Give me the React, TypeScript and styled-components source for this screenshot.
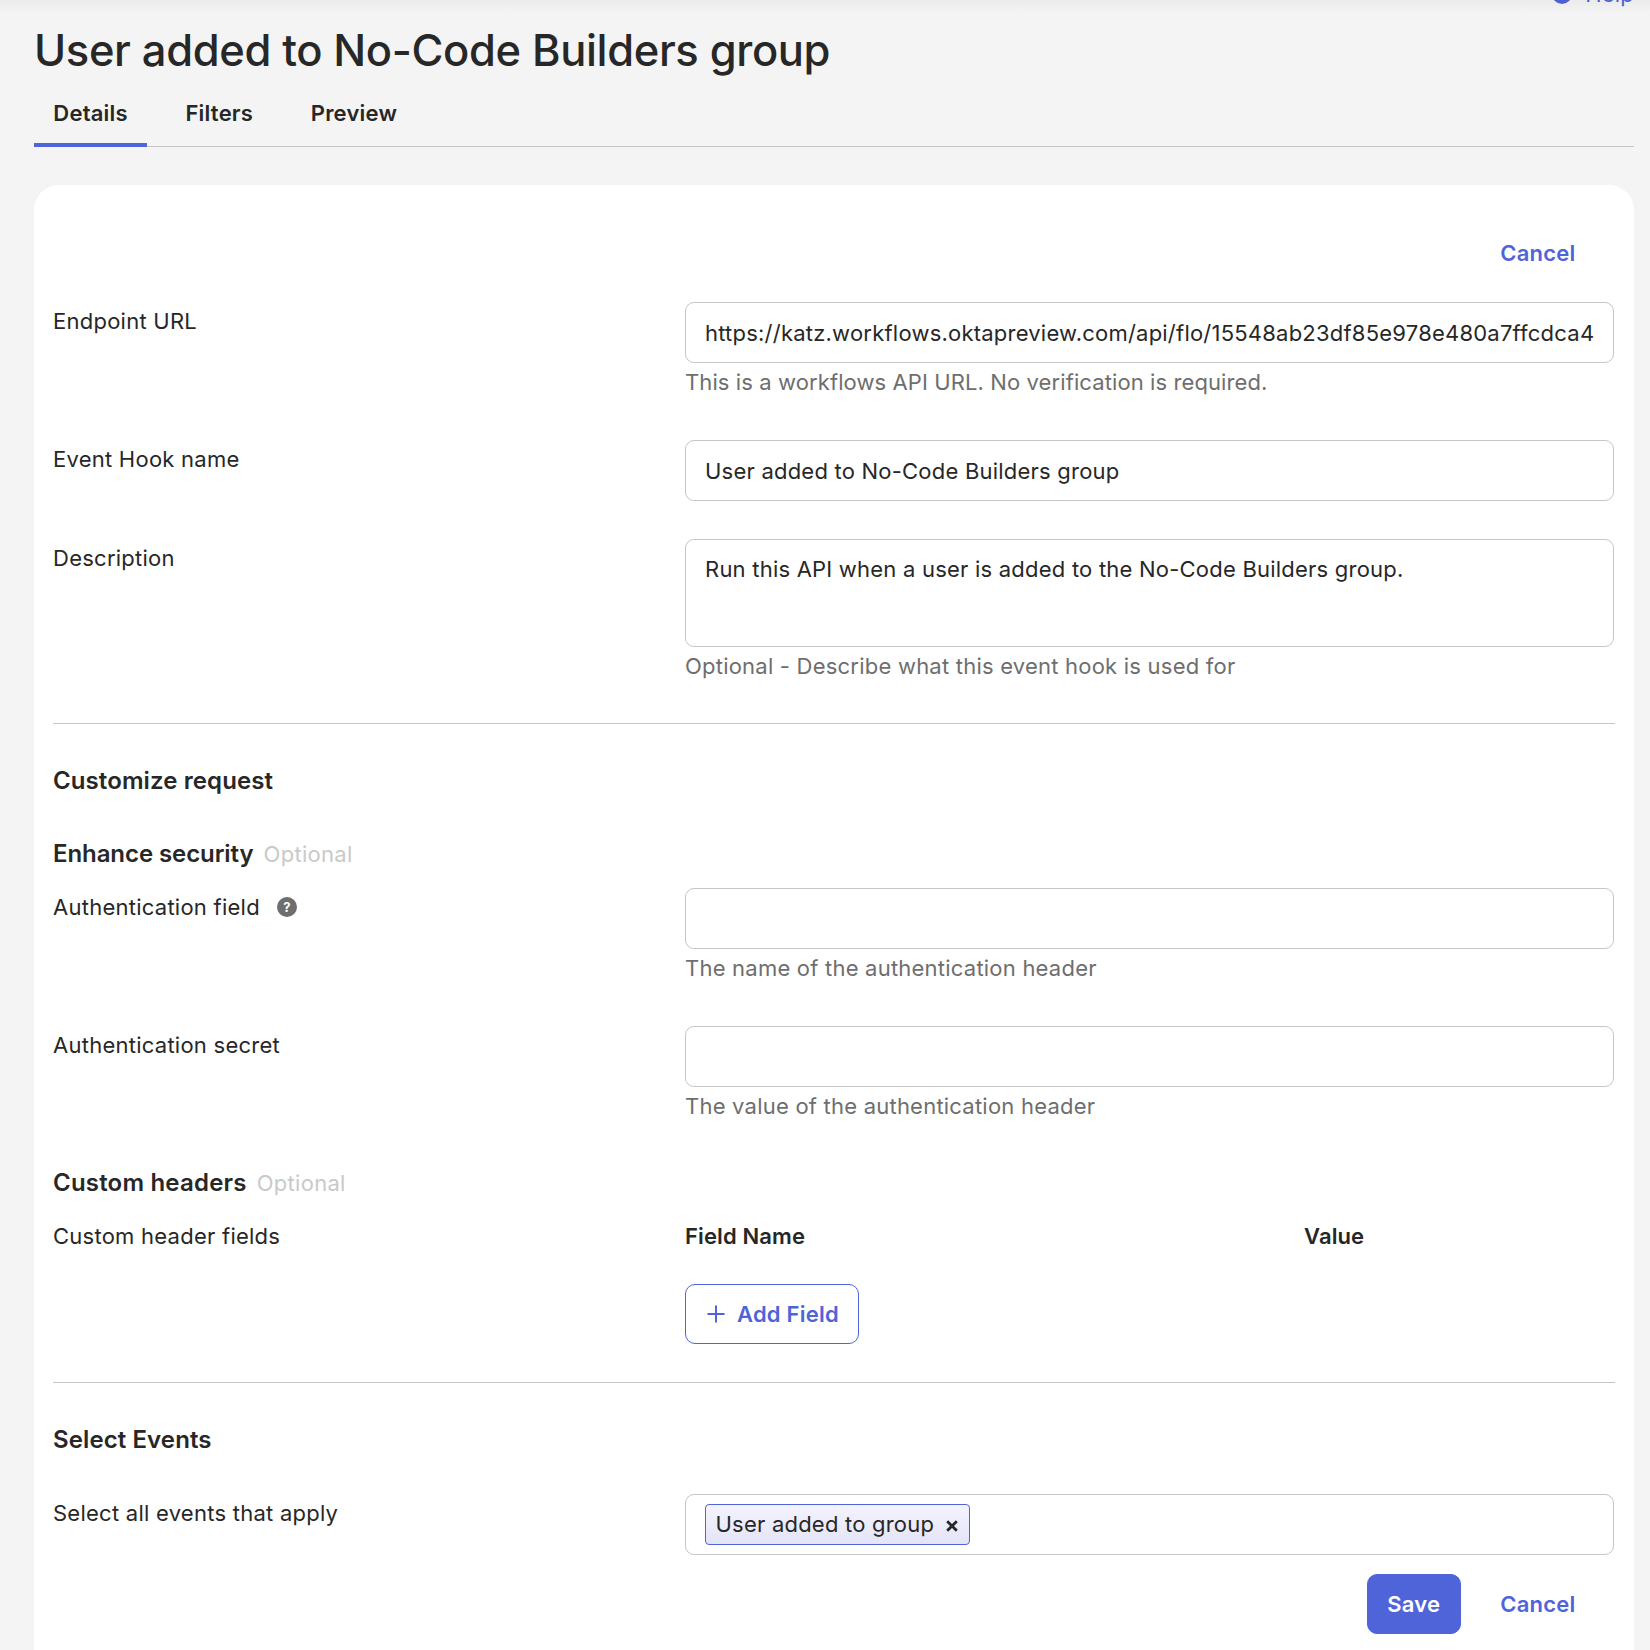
import React from 'react';
import type { ReactNode } from 'react';
import styled, { createGlobalStyle } from 'styled-components';

const color = {
  page: '#f4f4f4',
  card: '#ffffff',
  text: '#272727',
  muted: '#6e6e6e',
  faint: '#c9c9c9',
  line: '#c6c6c6',
  primary: '#4f64d9',
};

const GlobalStyle = createGlobalStyle`
  *, *::before, *::after { box-sizing: border-box; }
  body {
    margin: 0;
    background: ${color.page};
    color: ${color.text};
    font: 400 22px/30px Inter, "Liberation Sans", sans-serif;
    letter-spacing: 0.22px;
  }
  input, textarea, button { font: inherit; letter-spacing: inherit; color: inherit; margin: 0; }
`;

const Page = styled.main`
  position: relative;
  display: flex;
  flex-direction: column;
  height: 1650px;
  padding: 0 16px 0 34px;
  overflow: hidden;
`;

const TopShadow = styled.div`
  position: absolute;
  inset: 0 0 auto 0;
  height: 13px;
  background: linear-gradient(rgba(0, 0, 0, 0.04), rgba(0, 0, 0, 0));
  pointer-events: none;
`;

const HelpBar = styled.div`
  display: flex;
  justify-content: flex-end;
  flex: none;
  height: 30px;
  margin-top: -21px;
`;

const HelpLink = styled.a`
  display: flex;
  align-items: center;
  gap: 13px;
  color: ${color.primary};
`;

const HelpDot = styled.span<{ $tone: string }>`
  display: inline-flex;
  align-items: center;
  justify-content: center;
  flex: none;
  width: 20px;
  height: 20px;
  border-radius: 50%;
  background: ${(p) => p.$tone};
  color: #fff;
  font-size: 13px;
  font-weight: 700;
  line-height: 20px;
  letter-spacing: 0;
`;

const Title = styled.h1`
  flex: none;
  margin: 11px 0 -1px;
  font-size: 43.5px;
  line-height: 60px;
  font-weight: 500;
  letter-spacing: -0.36px;
  white-space: nowrap;
`;

const Tabs = styled.nav`
  display: flex;
  flex: none;
  gap: 19px;
  box-shadow: inset 0 -1px 0 ${color.line};
`;

const Tab = styled.a<{ $active?: boolean }>`
  padding: 19px 19.3px 15px;
  border-bottom: 4px solid ${(p) => (p.$active ? color.primary : 'transparent')};
  font-weight: 600;
`;

const Card = styled.section`
  flex: none;
  height: 1500px;
  margin-top: 38px;
  padding: 38px 19px 0;
  border-radius: 25px 25px 0 0;
  background: ${color.card};
`;

const Actions = styled.div<{ $top?: number; $bottom?: number }>`
  display: flex;
  justify-content: flex-end;
  gap: 19px;
  margin: ${(p) => p.$top ?? 0}px 19px ${(p) => p.$bottom ?? 0}px 0;
`;

const Button = styled.button<{ $kind: 'solid' | 'outline' | 'link' }>`
  display: inline-flex;
  align-items: center;
  height: 60px;
  padding: 0 ${(p) => (p.$kind === 'outline' ? '19px 0 21px' : '19.5px')};
  border: 1px solid ${(p) => (p.$kind === 'link' ? 'transparent' : color.primary)};
  border-radius: 10px;
  background: ${(p) => (p.$kind === 'solid' ? color.primary : 'transparent')};
  color: ${(p) => (p.$kind === 'solid' ? '#fff' : color.primary)};
  font-weight: 600;
`;

const ButtonIcon = styled.svg`
  width: 18px;
  height: 18px;
  margin-right: 12px;
`;

const Rows = styled.div`
  display: flex;
  flex-direction: column;
  gap: 38px;
`;

const Row = styled.div`
  display: grid;
  grid-template-columns: 632px 929px;
  align-items: start;
`;

const Label = styled.label`
  display: flex;
  align-items: center;
  gap: 17px;
  padding-top: 4px;
  letter-spacing: 0.25px;
`;

const Input = styled.input`
  display: block;
  width: 100%;
  height: 61px;
  padding: 0 19px;
  border: 1px solid ${color.line};
  border-radius: 9px;
  background: #fff;
  outline: none;
`;

const TextArea = styled.textarea`
  display: block;
  width: 100%;
  height: 108px;
  padding: 14px 19px;
  border: 1px solid ${color.line};
  border-radius: 9px;
  background: #fff;
  outline: none;
  resize: none;
`;

const Hint = styled.p<{ $tight?: boolean }>`
  margin: 4px 0 5px;
  color: ${color.muted};
  letter-spacing: ${(p) => (p.$tight ? '0.1px' : 'inherit')};
`;

const Divider = styled.hr<{ $top: number }>`
  height: 1px;
  margin: ${(p) => p.$top}px 0 40px;
  border: 0;
  background: ${color.line};
`;

const Heading = styled.h2<{ $top?: number; $bottom: number; $spacing?: number }>`
  display: flex;
  align-items: baseline;
  gap: 10px;
  height: 32px;
  margin: ${(p) => p.$top ?? 0}px 0 ${(p) => p.$bottom}px;
  font-size: 24px;
  line-height: 32px;
  font-weight: 600;
  letter-spacing: ${(p) => p.$spacing ?? 0.1}px;
`;

const Optional = styled.span`
  color: ${color.faint};
  font-size: 22px;
  font-weight: 400;
  letter-spacing: 0.3px;
`;

const HeaderColumns = styled.div`
  display: grid;
  grid-template-columns: 619px 1fr;
  margin-bottom: 33px;
  padding-top: 4px;
  font-weight: 600;
  letter-spacing: 0.12px;
`;

const TokenBox = styled.div`
  display: flex;
  align-items: center;
  height: 61px;
  padding: 0 19px;
  border: 1px solid ${color.line};
  border-radius: 9px;
`;

const Token = styled.span`
  display: inline-flex;
  align-items: center;
  width: 265px;
  height: 41px;
  padding: 0 11.5px 2px 9.5px;
  justify-content: space-between;
  border: 1px solid ${color.primary};
  border-radius: 4px;
  background: linear-gradient(#f4f3fe, #e4e4f7);
`;

const TokenClose = styled.svg`
  width: 12px;
  height: 12px;
  margin-top: 4px;
`;

type FieldProps = { label: string; help?: boolean; children: ReactNode };

function Field({ label, help, children }: FieldProps) {
  return (
    <Row>
      <Label>
        {label}
        {help && <HelpDot $tone={color.muted}>?</HelpDot>}
      </Label>
      <div>{children}</div>
    </Row>
  );
}

export default function App() {
  return (
    <>
      <GlobalStyle />
      <Page>
        <HelpBar>
          <HelpLink>
            <HelpDot $tone={color.primary}>?</HelpDot>
            Help
          </HelpLink>
        </HelpBar>
        <Title>User added to No-Code Builders group</Title>
        <Tabs>
          <Tab $active>Details</Tab>
          <Tab>Filters</Tab>
          <Tab>Preview</Tab>
        </Tabs>
        <Card>
          <Actions $bottom={19}>
            <Button $kind="link">Cancel</Button>
          </Actions>
          <Rows>
            <Field label="Endpoint URL">
              <Input readOnly value="https://katz.workflows.oktapreview.com/api/flo/15548ab23df85e978e480a7ffcdca4" />
              <Hint $tight>This is a workflows API URL. No verification is required.</Hint>
            </Field>
            <Field label="Event Hook name">
              <Input readOnly value="User added to No-Code Builders group" />
            </Field>
            <Field label="Description">
              <TextArea readOnly value="Run this API when a user is added to the No-Code Builders group." />
              <Hint>Optional - Describe what this event hook is used for</Hint>
            </Field>
          </Rows>
          <Divider $top={37} />
          <Heading $top={41} $bottom={41} $spacing={0.1}>Customize request</Heading>
          <Heading $bottom={18} $spacing={-0.08}>
            Enhance security <Optional>Optional</Optional>
          </Heading>
          <Rows>
            <Field label="Authentication field" help>
              <Input readOnly value="" />
              <Hint>The name of the authentication header</Hint>
            </Field>
            <Field label="Authentication secret">
              <Input readOnly value="" />
              <Hint>The value of the authentication header</Hint>
            </Field>
          </Rows>
          <Heading $top={41} $bottom={18} $spacing={0.2}>
            Custom headers <Optional>Optional</Optional>
          </Heading>
          <Field label="Custom header fields">
            <HeaderColumns>
              <span>Field Name</span>
              <span>Value</span>
            </HeaderColumns>
            <Button $kind="outline">
              <ButtonIcon viewBox="0 0 18 18" fill="none" stroke="currentColor" strokeWidth="2">
                <path d="M9 0.5v17M0.5 9h17" />
              </ButtonIcon>
              Add Field
            </Button>
          </Field>
          <Divider $top={38} />
          <Heading $top={41} $bottom={38}>Select Events</Heading>
          <Field label="Select all events that apply">
            <TokenBox>
              <Token>
                User added to group
                <TokenClose viewBox="0 0 12 12" fill="none" stroke={color.text} strokeWidth="2.8">
                  <path d="M1.2 1.2l9.6 9.6M10.8 1.2l-9.6 9.6" />
                </TokenClose>
              </Token>
            </TokenBox>
          </Field>
          <Actions $top={19}>
            <Button $kind="solid">Save</Button>
            <Button $kind="link">Cancel</Button>
          </Actions>
        </Card>
        <TopShadow />
      </Page>
    </>
  );
}
